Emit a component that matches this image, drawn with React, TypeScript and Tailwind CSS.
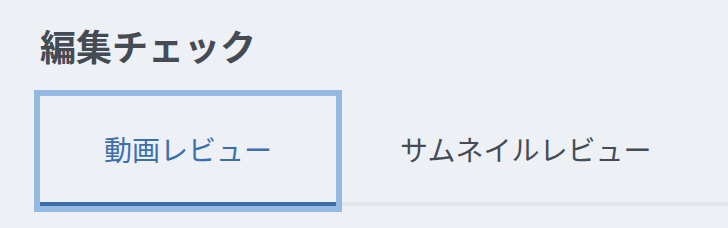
export default function App() {
  return (
    <div
      className="h-[228px] w-[728px] overflow-hidden bg-[#edf1f6] pl-10 pt-[18px]"
      style={{ fontFamily: '"Noto Sans CJK JP", "Noto Sans", sans-serif' }}
    >
      <h1 className="text-[36px] leading-[54px] font-bold text-[#444b53]">編集チェック</h1>
      <div className="mt-6 flex border-b-4 border-[#e3e7ec]">
        <button className="-mb-1 h-[110px] w-[296px] border-b-4 border-[#3b6eab] px-16 text-[28px] text-[#3d6fab] ring-[6px] ring-[#94bae3]">
          動画レビュー
        </button>
        <button className="-mb-1 h-[110px] border-b-4 border-transparent px-16 text-[28px] text-[#454c54]">
          サムネイルレビュー
        </button>
      </div>
    </div>
  );
}
